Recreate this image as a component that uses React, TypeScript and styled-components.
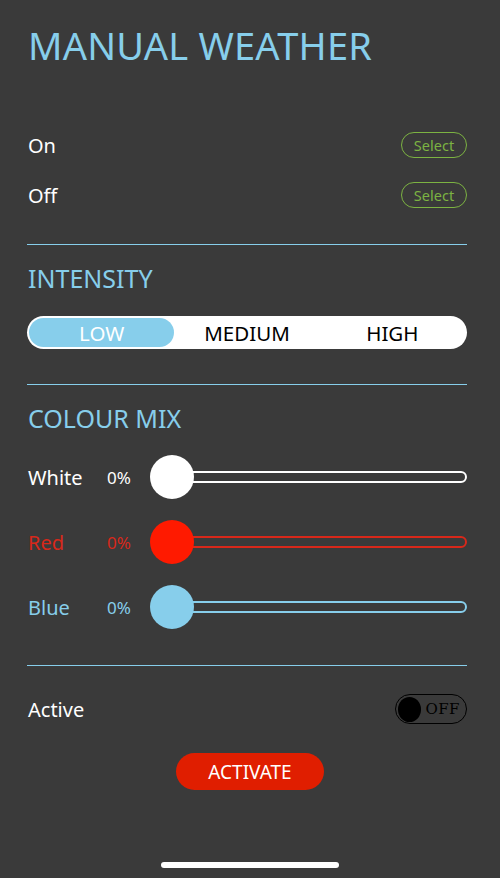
import React from "react";
import styled, { createGlobalStyle } from "styled-components";

const SKY = "#87ceeb";
const RED = "#d8281a";
const GREEN = "#7cb342";

const GlobalStyle = createGlobalStyle`
  html, body {
    margin: 0;
    padding: 0;
    background: #3a3a3a;
  }
  body {
    font-family: "Noto Sans", "Liberation Sans", sans-serif;
  }
`;

const Screen = styled.div`
  position: relative;
  width: 500px;
  height: 878px;
  box-sizing: border-box;
  padding: 0 33px 0 27px;
  background: #3a3a3a;
  overflow: hidden;
`;

const Header = styled.div`
  height: 90px;
  display: flex;
  align-items: center;
`;

const Title = styled.h1`
  margin: 0 0 0 1px;
  font-size: 38px;
  font-weight: 400;
  color: ${SKY};
  letter-spacing: 0.2px;
`;

const OptionList = styled.div`
  margin-top: 30px;
  display: flex;
  flex-direction: column;
`;

const OptionRow = styled.div`
  height: 50px;
  display: flex;
  align-items: center;
  justify-content: space-between;
  padding-left: 1px;
`;

const RowLabel = styled.span<{ $color?: string }>`
  font-size: 20px;
  color: ${(p) => p.$color || "#ffffff"};
`;

const SelectButton = styled.button`
  width: 66px;
  height: 26px;
  border: 1.5px solid ${GREEN};
  border-radius: 13px;
  background: transparent;
  color: ${GREEN};
  font-family: inherit;
  font-size: 14.5px;
  padding: 0;
`;

const Divider = styled.hr<{ $top: number }>`
  margin: ${(p) => p.$top}px 0 0;
  border: none;
  height: 1px;
  background: ${SKY};
`;

const SectionTitle = styled.h2`
  margin: 0 0 0 1px;
  height: 66px;
  display: flex;
  align-items: center;
  font-size: 25px;
  font-weight: 400;
  color: ${SKY};
`;

const Segmented = styled.div`
  margin-top: 5px;
  height: 33px;
  box-sizing: border-box;
  padding: 2px;
  border-radius: 17px;
  background: #ffffff;
  display: grid;
  grid-template-columns: repeat(3, 1fr);
`;

const Segment = styled.div<{ $active?: boolean }>`
  display: flex;
  align-items: center;
  justify-content: center;
  border-radius: 15px;
  font-size: 20.5px;
  color: ${(p) => (p.$active ? "#ffffff" : "#000000")};
  background: ${(p) => (p.$active ? SKY : "transparent")};
`;

const SliderList = styled.div`
  display: flex;
  flex-direction: column;
  gap: 13px;
`;

const SliderRow = styled.div<{ $color: string }>`
  height: 52px;
  display: flex;
  align-items: center;
  color: ${(p) => p.$color};
  padding-left: 1px;
`;

const SliderLabel = styled.span`
  width: 79px;
  font-size: 20px;
`;

const SliderValue = styled.span`
  width: 43px;
  font-size: 17px;
`;

const SliderTrack = styled.div`
  position: relative;
  flex: 1;
  height: 44px;
  display: flex;
  align-items: center;
  padding-left: 22px;
`;

const TrackLine = styled.div<{ $color: string }>`
  flex: 1;
  height: 12px;
  box-sizing: border-box;
  border: 2px solid ${(p) => p.$color};
  border-radius: 6px;
`;

const Thumb = styled.div<{ $color: string }>`
  position: absolute;
  left: 0;
  top: 0;
  width: 44px;
  height: 44px;
  border-radius: 50%;
  background: ${(p) => p.$color};
`;

const ActiveRow = styled.div`
  margin-top: 13px;
  height: 60px;
  display: flex;
  align-items: center;
  justify-content: space-between;
  padding-left: 1px;
`;

const Toggle = styled.div`
  width: 72px;
  height: 30px;
  box-sizing: border-box;
  border: 1.5px solid #000;
  border-radius: 15px;
  display: flex;
  align-items: center;
  padding: 0 6px 0 2px;
  gap: 4px;
`;

const ToggleKnob = styled.div`
  width: 25px;
  height: 25px;
  border-radius: 50%;
  background: #000;
`;

const ToggleText = styled.span`
  font-family: "DejaVu Serif", "Liberation Serif", serif;
  font-size: 15px;
  font-weight: 400;
  letter-spacing: 0.5px;
  color: #000;
`;

const ButtonWrap = styled.div`
  margin-top: 14px;
  display: flex;
  justify-content: center;
  padding-left: 6px;
`;

const ActivateButton = styled.button`
  width: 148px;
  height: 37px;
  border: none;
  border-radius: 19px;
  background: #e01e00;
  color: #ffffff;
  font-family: inherit;
  font-size: 19px;
  padding: 0;
`;

const HomeIndicator = styled.div`
  position: absolute;
  left: 161px;
  bottom: 10px;
  width: 178px;
  height: 6px;
  border-radius: 3px;
  background: #ffffff;
`;

const sliders = [
  { name: "White", color: "#ffffff", thumb: "#ffffff", track: "#ffffff" },
  { name: "Red", color: RED, thumb: "#ff1a00", track: RED },
  { name: "Blue", color: SKY, thumb: SKY, track: SKY },
];

export default function App() {
  return (
    <>
      <GlobalStyle />
      <Screen>
        <Header>
          <Title>MANUAL WEATHER</Title>
        </Header>

        <OptionList>
          <OptionRow>
            <RowLabel>On</RowLabel>
            <SelectButton>Select</SelectButton>
          </OptionRow>
          <OptionRow>
            <RowLabel>Off</RowLabel>
            <SelectButton>Select</SelectButton>
          </OptionRow>
        </OptionList>

        <Divider $top={24} />
        <SectionTitle>INTENSITY</SectionTitle>
        <Segmented>
          <Segment $active>LOW</Segment>
          <Segment>MEDIUM</Segment>
          <Segment>HIGH</Segment>
        </Segmented>

        <Divider $top={35} />
        <SectionTitle>COLOUR MIX</SectionTitle>
        <SliderList>
          {sliders.map((s) => (
            <SliderRow key={s.name} $color={s.color}>
              <SliderLabel>{s.name}</SliderLabel>
              <SliderValue>0%</SliderValue>
              <SliderTrack>
                <TrackLine $color={s.track} />
                <Thumb $color={s.thumb} />
              </SliderTrack>
            </SliderRow>
          ))}
        </SliderList>

        <Divider $top={32} />
        <ActiveRow>
          <RowLabel>Active</RowLabel>
          <Toggle>
            <ToggleKnob />
            <ToggleText>OFF</ToggleText>
          </Toggle>
        </ActiveRow>
        <ButtonWrap>
          <ActivateButton>ACTIVATE</ActivateButton>
        </ButtonWrap>

        <HomeIndicator />
      </Screen>
    </>
  );
}
